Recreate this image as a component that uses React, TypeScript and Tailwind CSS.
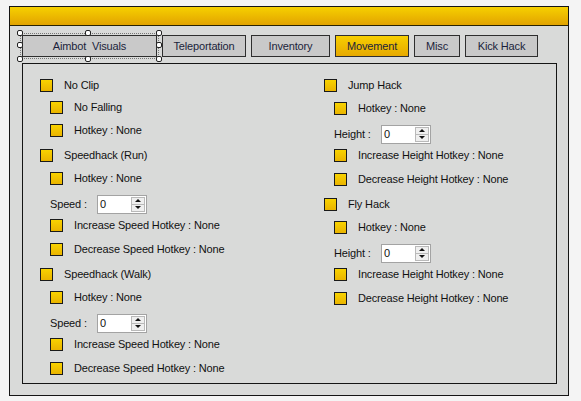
import React from "react";

type Row =
  | { kind: "main" | "sub"; text: string; mt: string }
  | { kind: "spin"; label: string; mt: string };

const leftRows: Row[] = [
  { kind: "main", text: "No Clip", mt: "mt-0" },
  { kind: "sub", text: "No Falling", mt: "mt-[2px]" },
  { kind: "sub", text: "Hotkey : None", mt: "mt-[3px]" },
  { kind: "main", text: "Speedhack (Run)", mt: "mt-[5px]" },
  { kind: "sub", text: "Hotkey : None", mt: "mt-[3px]" },
  { kind: "spin", label: "Speed :", mt: "mt-[6px]" },
  { kind: "sub", text: "Increase Speed Hotkey : None", mt: "mt-[1px]" },
  { kind: "sub", text: "Decrease Speed Hotkey : None", mt: "mt-[4px]" },
  { kind: "main", text: "Speedhack (Walk)", mt: "mt-[5px]" },
  { kind: "sub", text: "Hotkey : None", mt: "mt-[3px]" },
  { kind: "spin", label: "Speed :", mt: "mt-[6px]" },
  { kind: "sub", text: "Increase Speed Hotkey : None", mt: "mt-[1px]" },
  { kind: "sub", text: "Decrease Speed Hotkey : None", mt: "mt-[4px]" },
];

const rightRows: Row[] = [
  { kind: "main", text: "Jump Hack", mt: "mt-0" },
  { kind: "sub", text: "Hotkey : None", mt: "mt-[3px]" },
  { kind: "spin", label: "Height :", mt: "mt-[6px]" },
  { kind: "sub", text: "Increase Height Hotkey : None", mt: "mt-[1px]" },
  { kind: "sub", text: "Decrease Height Hotkey : None", mt: "mt-[4px]" },
  { kind: "main", text: "Fly Hack", mt: "mt-[5px]" },
  { kind: "sub", text: "Hotkey : None", mt: "mt-[3px]" },
  { kind: "spin", label: "Height :", mt: "mt-[6px]" },
  { kind: "sub", text: "Increase Height Hotkey : None", mt: "mt-[1px]" },
  { kind: "sub", text: "Decrease Height Hotkey : None", mt: "mt-[4px]" },
];

const tabs = [
  { label: "Aimbot\u00a0\u00a0Visuals", w: "w-[135px]" },
  { label: "Teleportation", w: "w-[84px]" },
  { label: "Inventory", w: "w-[79px]" },
  { label: "Movement", w: "w-[74px]", active: true },
  { label: "Misc", w: "w-[46px]" },
  { label: "Kick Hack", w: "w-[73px]" },
];

function Check() {
  return (
    <span className="block w-[13px] h-[13px] shrink-0 border border-[#1a1a1a] bg-gradient-to-b from-[#f8d200] to-[#eab400]" />
  );
}

function Spinner() {
  return (
    <div className="flex w-[50px] h-[19px] shrink-0 border border-[#a3a3a3] bg-white">
      <span className="flex-1 pl-[2px] leading-[17px] text-[#111]">0</span>
      <div className="my-[1px] mr-[1px] flex w-[14px] flex-col border border-[#b9b9b9] bg-[#efefef]">
        <div className="flex flex-1 items-center justify-center border-b border-[#b9b9b9]">
          <span className="block w-0 h-0 border-x-[3px] border-x-transparent border-b-[3px] border-b-[#111]" />
        </div>
        <div className="flex flex-1 items-center justify-center">
          <span className="block w-0 h-0 border-x-[3px] border-x-transparent border-t-[3px] border-t-[#111]" />
        </div>
      </div>
    </div>
  );
}

function OptionRow({ row }: { row: Row }) {
  if (row.kind === "spin") {
    return (
      <div className={`flex h-[20px] items-center pl-[10px] ${row.mt}`}>
        <span className="w-[47px] shrink-0 whitespace-nowrap">{row.label}</span>
        <Spinner />
      </div>
    );
  }
  return (
    <div className={`flex h-[20px] items-center ${row.kind === "sub" ? "pl-[10px]" : ""} ${row.mt}`}>
      <Check />
      <span className="ml-[11px] whitespace-nowrap">{row.text}</span>
    </div>
  );
}

function SelectionFrame() {
  const handle = "absolute w-[6px] h-[6px] rounded-[2px] border border-[#222] bg-white";
  return (
    <div className="pointer-events-none absolute left-[-2px] top-[-2px] w-[139px] h-[26px] border border-dotted border-[#777]">
      <span className={`${handle} left-[-4px] top-[-4px]`} />
      <span className={`${handle} left-[64px] top-[-4px]`} />
      <span className={`${handle} right-[-4px] top-[-4px]`} />
      <span className={`${handle} left-[-4px] top-[8px]`} />
      <span className={`${handle} right-[-4px] top-[8px]`} />
      <span className={`${handle} left-[-4px] bottom-[-4px]`} />
      <span className={`${handle} left-[64px] bottom-[-4px]`} />
      <span className={`${handle} right-[-4px] bottom-[-4px]`} />
    </div>
  );
}

export default function App() {
  return (
    <div
      className="min-h-screen bg-[#f4f4f4] pl-[9px] pt-[6px] text-[11px] tracking-[-0.15px] text-[#111]"
      style={{ fontFamily: '"Liberation Sans", Arial, sans-serif' }}
    >
      <div className="flex w-[560px] h-[390px] flex-col border border-[#151515] bg-[#d9dad9]">
        <div className="h-[19px] shrink-0 border-b border-[#2a2200] bg-gradient-to-b from-[#f6d000] to-[#e2a300]" />

        <div className="relative ml-[12px] mt-[9px] flex h-[22px] gap-[5px]">
          {tabs.map((t) => (
            <div
              key={t.label}
              className={`${t.w} flex h-full items-center justify-center border border-[#2e2e2e] text-[#1b1f3b] ${
                t.active ? "bg-gradient-to-b from-[#f7cf00] to-[#e6a900]" : "bg-[#c9c9c9]"
              }`}
            >
              {t.label}
            </div>
          ))}
          <SelectionFrame />
        </div>

        <div className="ml-[12px] mt-[6px] flex w-[535px] h-[321px] border border-[#151515] pt-[11px]">
          <div className="flex w-[301px] flex-col pl-[17px]">
            {leftRows.map((r, i) => (
              <OptionRow key={i} row={r} />
            ))}
          </div>
          <div className="flex flex-col">
            {rightRows.map((r, i) => (
              <OptionRow key={i} row={r} />
            ))}
          </div>
        </div>
      </div>
    </div>
  );
}
